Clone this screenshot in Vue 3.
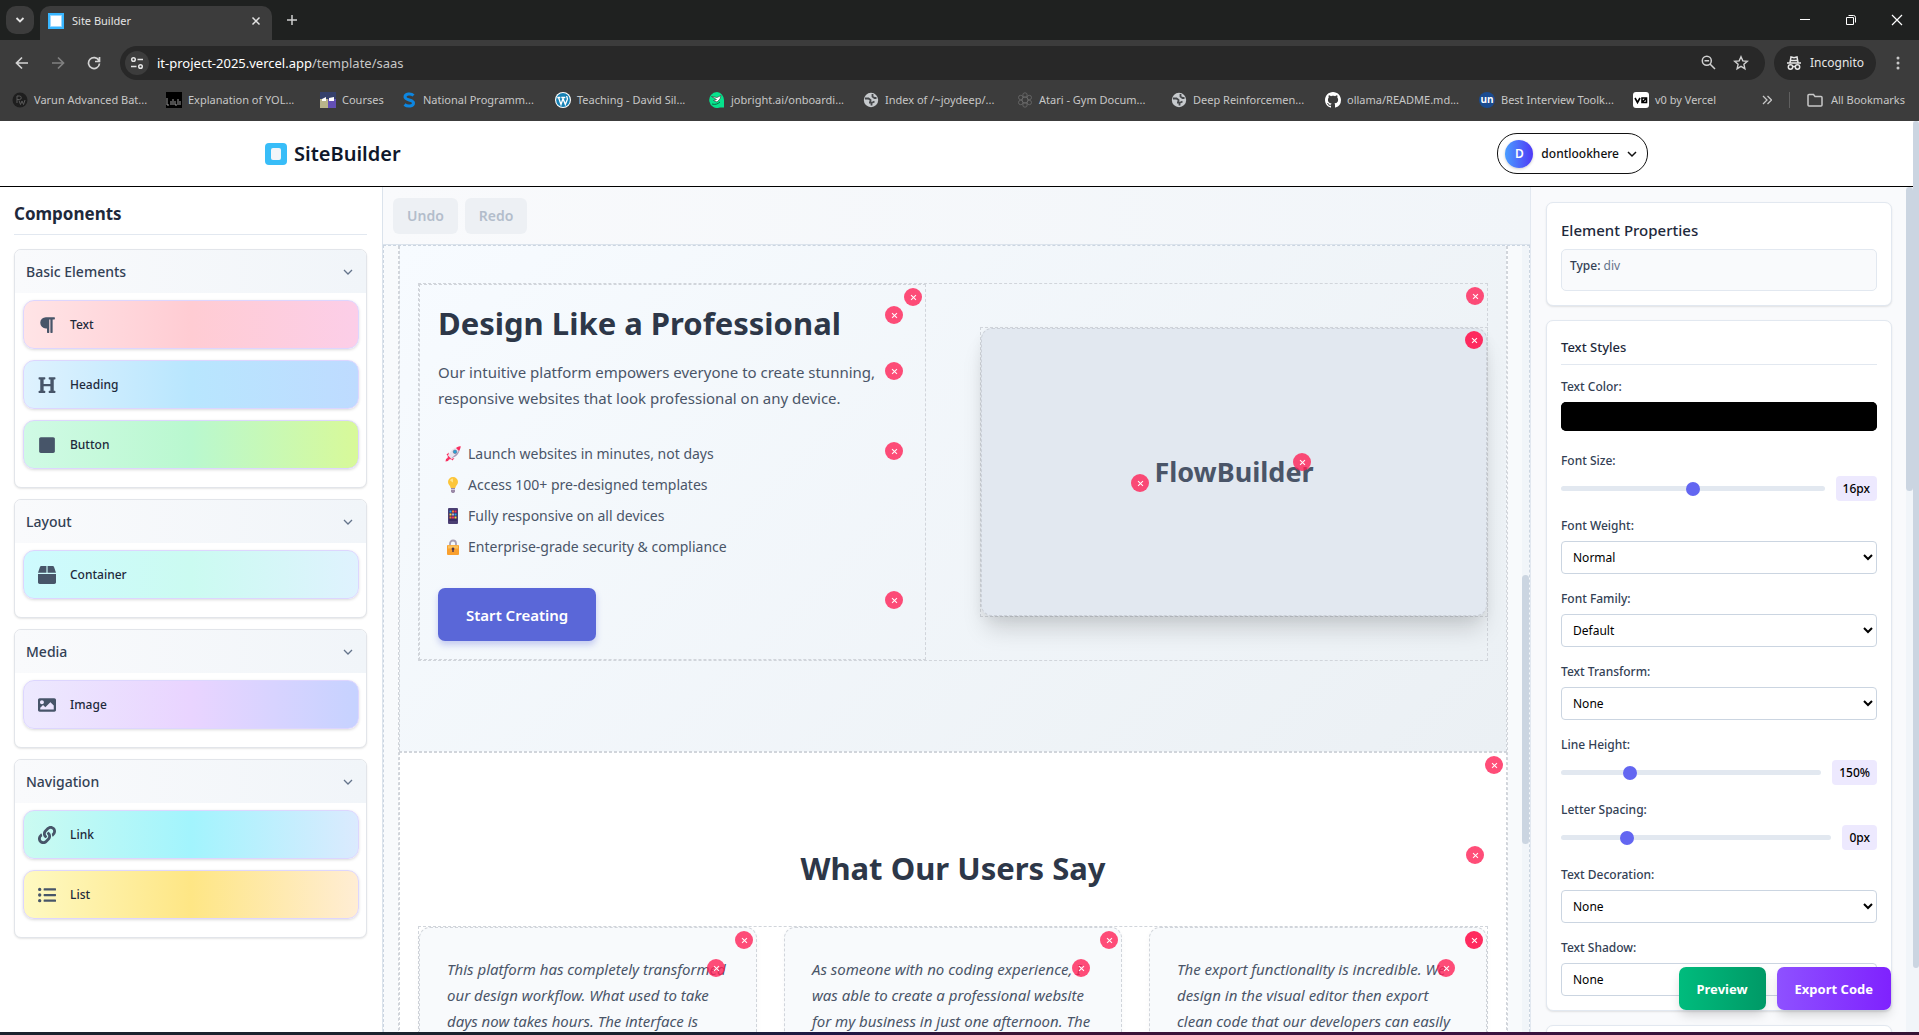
<script setup>
import { ref } from 'vue'

const bookmarks = [
  { label: 'Varun Advanced Bat...', icon: 'pw' },
  { label: 'Explanation of YOL...', icon: 'yolo' },
  { label: 'Courses', icon: 'courses', short: true },
  { label: 'National Programm...', icon: 'swayam' },
  { label: 'Teaching - David Sil...', icon: 'wp' },
  { label: 'jobright.ai/onboardi...', icon: 'job' },
  { label: 'Index of /~joydeep/...', icon: 'globe' },
  { label: 'Atari - Gym Docum...', icon: 'gym' },
  { label: 'Deep Reinforcemen...', icon: 'globe' },
  { label: 'ollama/README.md...', icon: 'github' },
  { label: 'Best Interview Toolk...', icon: 'un' },
  { label: 'v0 by Vercel', icon: 'v0', short: true }
]

const groups = [
  {
    title: 'Basic Elements',
    items: [
      { name: 'Text', tone: 'rose', box: '0 0 448 512', d: 'M448 48v32a16 16 0 0 1-16 16h-48v368a16 16 0 0 1-16 16h-32a16 16 0 0 1-16-16V96h-32v368a16 16 0 0 1-16 16h-32a16 16 0 0 1-16-16V352h-32a160 160 0 0 1 0-320h240a16 16 0 0 1 16 16z' },
      { name: 'Heading', tone: 'sky', box: '0 0 512 512', d: 'M448 96v320h32a16 16 0 0 1 16 16v32a16 16 0 0 1-16 16H320a16 16 0 0 1-16-16v-32a16 16 0 0 1 16-16h32V288H160v128h32a16 16 0 0 1 16 16v32a16 16 0 0 1-16 16H32a16 16 0 0 1-16-16v-32a16 16 0 0 1 16-16h32V96H32a16 16 0 0 1-16-16V48a16 16 0 0 1 16-16h160a16 16 0 0 1 16 16v32a16 16 0 0 1-16 16h-32v128h192V96h-32a16 16 0 0 1-16-16V48a16 16 0 0 1 16-16h160a16 16 0 0 1 16 16v32a16 16 0 0 1-16 16z' },
      { name: 'Button', tone: 'green', box: '0 0 448 512', d: 'M400 32H48C21.5 32 0 53.5 0 80v352c0 26.5 21.5 48 48 48h352c26.5 0 48-21.5 48-48V80c0-26.5-21.5-48-48-48z' }
    ]
  },
  {
    title: 'Layout',
    items: [
      { name: 'Container', tone: 'cyan', box: '0 0 512 512', d: 'M509.5 184.6L458.9 32.8C452.4 13.2 434.1 0 413.4 0H272v192h238.7c-.4-2.5-.4-5-1.2-7.4zM240 0H98.6c-20.7 0-39 13.2-45.5 32.8L2.5 184.6c-.8 2.4-.8 4.9-1.2 7.4H240V0zM0 224v240c0 26.5 21.5 48 48 48h416c26.5 0 48-21.5 48-48V224H0z' }
    ]
  },
  {
    title: 'Media',
    items: [
      { name: 'Image', tone: 'violet', box: '0 0 512 512', d: 'M464 448H48c-26.51 0-48-21.49-48-48V112c0-26.51 21.49-48 48-48h416c26.51 0 48 21.49 48 48v288c0 26.51-21.49 48-48 48zM112 120c-30.928 0-56 25.072-56 56s25.072 56 56 56 56-25.072 56-56-25.072-56-56-56zM64 384h384V272l-87.515-87.515c-4.686-4.686-12.284-4.686-16.971 0L208 320l-55.515-55.515c-4.686-4.686-12.284-4.686-16.971 0L64 336v48z' }
    ]
  },
  {
    title: 'Navigation',
    items: [
      { name: 'Link', tone: 'teal', box: '0 0 512 512', d: 'M326.612 185.391c59.747 59.809 58.927 155.698.36 214.59-.11.12-.24.25-.36.37l-67.2 67.2c-59.27 59.27-155.699 59.262-214.96 0-59.27-59.26-59.27-155.7 0-214.96l37.106-37.106c9.84-9.84 26.786-3.3 27.294 10.606.648 17.722 3.826 35.527 9.69 52.721 1.986 5.822.567 12.262-3.783 16.612l-13.087 13.087c-28.026 28.026-28.905 73.66-1.155 101.96 28.024 28.579 74.086 28.749 102.325.51l67.2-67.19c28.191-28.191 28.073-73.757 0-101.83-3.701-3.694-7.429-6.564-10.341-8.569a16.037 16.037 0 0 1-6.947-12.606c-.396-10.567 3.348-21.456 11.698-29.806l21.054-21.055c5.521-5.521 14.182-6.199 20.584-1.731a152.482 152.482 0 0 1 20.522 17.197zM467.547 44.449c-59.261-59.262-155.69-59.27-214.96 0l-67.2 67.2c-.12.12-.25.25-.36.37-58.566 58.892-59.387 154.781.36 214.59a152.454 152.454 0 0 0 20.521 17.196c6.402 4.468 15.064 3.789 20.584-1.731l21.054-21.055c8.35-8.35 12.094-19.239 11.698-29.806a16.037 16.037 0 0 0-6.947-12.606c-2.912-2.005-6.64-4.875-10.341-8.569-28.073-28.073-28.191-73.639 0-101.83l67.2-67.19c28.239-28.239 74.3-28.069 102.325.51 27.75 28.3 26.872 73.934-1.155 101.96l-13.087 13.087c-4.35 4.35-5.769 10.79-3.783 16.612 5.864 17.194 9.042 34.999 9.69 52.721.509 13.906 17.454 20.446 27.294 10.606l37.106-37.106c59.271-59.259 59.271-155.699.001-214.959z' },
      { name: 'List', tone: 'amber', box: '0 0 512 512', d: 'M48 48a48 48 0 1 0 48 48 48 48 0 0 0-48-48zm0 160a48 48 0 1 0 48 48 48 48 0 0 0-48-48zm0 160a48 48 0 1 0 48 48 48 48 0 0 0-48-48zm448 16H176a16 16 0 0 0-16 16v32a16 16 0 0 0 16 16h320a16 16 0 0 0 16-16v-32a16 16 0 0 0-16-16zm0-320H176a16 16 0 0 0-16 16v32a16 16 0 0 0 16 16h320a16 16 0 0 0 16-16V80a16 16 0 0 0-16-16zm0 160H176a16 16 0 0 0-16 16v32a16 16 0 0 0 16 16h320a16 16 0 0 0 16-16v-32a16 16 0 0 0-16-16z' }
    ]
  }
]

const features = [
  { icon: 'rocket', text: 'Launch websites in minutes, not days' },
  { icon: 'bulb', text: 'Access 100+ pre-designed templates' },
  { icon: 'phone', text: 'Fully responsive on all devices' },
  { icon: 'lock', text: 'Enterprise-grade security & compliance' }
]

const quotes = [
  ['This platform has completely transformed', 'our design workflow. What used to take', 'days now takes hours. The interface is'],
  ['As someone with no coding experience, I', 'was able to create a professional website', 'for my business in just one afternoon. The'],
  ['The export functionality is incredible. We', 'design in the visual editor then export', 'clean code that our developers can easily']
]

const textColor = ref('#000000')
const fields = ref([
  { id: 'font-size', label: 'Font Size:', kind: 'range', value: 50, shown: '16px' },
  { id: 'font-weight', label: 'Font Weight:', kind: 'select', value: 'Normal' },
  { id: 'font-family', label: 'Font Family:', kind: 'select', value: 'Default' },
  { id: 'text-transform', label: 'Text Transform:', kind: 'select', value: 'None' },
  { id: 'line-height', label: 'Line Height:', kind: 'range', value: 25, shown: '150%' },
  { id: 'letter-spacing', label: 'Letter Spacing:', kind: 'range', value: 23, shown: '0px' },
  { id: 'text-decoration', label: 'Text Decoration:', kind: 'select', value: 'None' },
  { id: 'text-shadow', label: 'Text Shadow:', kind: 'select', value: 'None' }
])
</script>

<template>
  <div class="window">
    <header class="browser">
      <div class="tabstrip">
        <button class="tab-search" aria-label="Search tabs">
          <svg width="10" height="10" viewBox="0 0 10 10"><path d="M1.500 3l3.500 3.500L8.500 3" fill="none" stroke="#e3e3e3" stroke-width="1.800" /></svg>
        </button>
        <div class="tab">
          <svg width="16" height="16" viewBox="0 0 16 16"><path fill="#38b6ff" d="M0 0h16v16H0z" /><path fill="#fff" stroke="#9bd8ff" d="M2.500 2.500h11v11h-11z" /></svg>
          <span class="tab-title">Site Builder</span>
          <button class="plain" aria-label="Close tab">
            <svg width="10" height="10" viewBox="0 0 10 10"><path d="M1.500 1.500l7 7m0-7l-7 7" stroke="#e3e3e3" stroke-width="1.500" /></svg>
          </button>
        </div>
        <button class="plain new-tab" aria-label="New tab">
          <svg width="12" height="12" viewBox="0 0 12 12"><path d="M6 1v10M1 6h10" stroke="#d0d0d0" stroke-width="1.500" /></svg>
        </button>
        <div class="win-controls">
          <svg width="12" height="12" viewBox="0 0 12 12"><path d="M1 5.500h10" stroke="#fff" /></svg>
          <svg width="12" height="12" viewBox="0 0 12 12"><path d="M1.500 3.500h7v7h-7zM3.500 1.500h5a2 2 0 0 1 2 2v5" fill="none" stroke="#fff" /></svg>
          <svg width="12" height="12" viewBox="0 0 12 12"><path d="M1 1l10 10M11 1L1 11" stroke="#fff" stroke-width="1.200" /></svg>
        </div>
      </div>

      <div class="toolbar">
        <nav class="nav-buttons">
          <button class="plain" aria-label="Back"><svg width="14" height="14" viewBox="0 0 14 14"><path d="M13 7H2m5-5.500L1.500 7 7 12.500" fill="none" stroke="#d3d3d3" stroke-width="1.700" /></svg></button>
          <button class="plain" aria-label="Forward"><svg width="14" height="14" viewBox="0 0 14 14"><path d="M1 7h11M7 1.500L12.500 7 7 12.500" fill="none" stroke="#808080" stroke-width="1.700" /></svg></button>
          <button class="plain" aria-label="Reload"><svg width="14" height="14" viewBox="0 0 14 14"><path d="M11.900 4.500A5.500 5.500 0 1 0 12.500 7.500M12.500 1v4.500H8" fill="none" stroke="#d3d3d3" stroke-width="1.700" /></svg></button>
        </nav>
        <div class="address">
          <span class="site-info">
            <svg width="14" height="14" viewBox="0 0 14 14" fill="none" stroke="#e3e3e3" stroke-width="1.500"><circle cx="3.500" cy="3.500" r="1.800" /><path d="M7.500 3.500H13M1 10.500h5.500" /><circle cx="10.500" cy="10.500" r="1.800" /></svg>
          </span>
          <span class="url"><b>it-project-2025.vercel.app</b>/template/saas</span>
          <span class="address-actions">
            <svg width="15" height="15" viewBox="0 0 15 15" fill="none" stroke="#d0d0d0" stroke-width="1.500"><circle cx="5.800" cy="5.800" r="4.500" /><path d="M3.500 5.800h4.600M9 9l5 5" /></svg>
            <svg width="16" height="16" viewBox="0 0 16 16" fill="none" stroke="#d0d0d0" stroke-width="1.400"><path d="M8 1.800l1.800 4.100 4.500.4-3.400 3 1 4.400L8 11.400l-3.900 2.300 1-4.400-3.400-3 4.500-.4z" /></svg>
          </span>
        </div>
        <div class="incognito">
          <svg width="16" height="16" viewBox="0 0 16 16" fill="none" stroke="#e6e6e6" stroke-width="1.500"><path d="M1 8h14M4 7.500L5 2l3 .8L11 2l1 5.500M4.500 5.500h7" /><circle cx="4.500" cy="12" r="2.200" /><circle cx="11.500" cy="12" r="2.200" /><path d="M6.700 11.500h2.600" /></svg>
          <span>Incognito</span>
        </div>
        <button class="plain" aria-label="Menu"><svg width="4" height="16" viewBox="0 0 4 16" fill="#c8c8c8"><circle cx="2" cy="3" r="1.500" /><circle cx="2" cy="8" r="1.500" /><circle cx="2" cy="13" r="1.500" /></svg></button>
      </div>

      <div class="bookmarks">
        <a v-for="b in bookmarks" :key="b.label" href="#" class="bookmark" :class="{ short: b.short }">
          <svg width="16" height="16" viewBox="0 0 16 16">
            <template v-if="b.icon === 'pw'"><circle cx="8" cy="8" r="7.500" fill="#1e1e1e" /><path d="M5 11V4h2.500a1.500 1.500 0 0 1 0 3.500H5m2 1l1.500 4L10 9l1.500 3.500L13 8" fill="none" stroke="#5a5a5a" /></template>
            <template v-else-if="b.icon === 'yolo'"><path fill="#000" d="M0 0h16v16H0z" /><path d="M1 6v7h2M5 9v4m2-6v6m2-4v4h2M12 7v6m2-4v4" fill="none" stroke="#9a9a9a" /></template>
            <template v-else-if="b.icon === 'courses'"><path fill="#35406b" d="M0 0h16v7H0z" /><path fill="#b9b58a" d="M0 7h8v9H0z" /><path fill="#6350b5" d="M8 7h8v9H8z" /><path fill="#fff" d="M2 7l4-2v4H2zM9 6l5-1v4H9z" /></template>
            <path v-else-if="b.icon === 'swayam'" d="M12.500 3.500C10 1 4 1.500 4 5s8.500 2.500 8.500 6-6 4-9 1.500" fill="none" stroke="#0d86e0" stroke-width="3" />
            <template v-else-if="b.icon === 'wp'"><circle cx="8" cy="8" r="8" fill="#fff" /><circle cx="8" cy="8" r="6.900" fill="#1681b5" /><path d="M2.300 5.500h3m1 0h4M3.500 5.500L6 12.500l2-6 2.300 6 2-5c.5-1.500-.6-2-.6-3.500" fill="none" stroke="#fff" stroke-width="1.300" /></template>
            <template v-else-if="b.icon === 'job'"><path d="M8 0a8 8 0 1 0 3 15.500h4V8a8 8 0 0 0-7-8z" fill="#06e28c" /><path d="M2.500 4.500l5.500 1 4-2-1 3.500-3 3-3.500-1.500 3-1z" fill="#fff" stroke="#333" stroke-width=".6" /><path d="M3 12c3 1 6 0 8-2" fill="none" stroke="#0a6b45" /></template>
            <template v-else-if="b.icon === 'globe'"><circle cx="8" cy="8" r="7.200" fill="#c7cacd" /><path d="M2 6.500h3.500L7.500 8v2.500H6M9.500 2v2.500l2 1.500h2M8.500 13.500V11l3-1.500" fill="none" stroke="#45474a" stroke-width="1.800" /></template>
            <g v-else-if="b.icon === 'gym'" fill="none" stroke="#6c6c6c" stroke-width=".8"><circle cx="8" cy="8" r="3" /><circle cx="8" cy="3" r="2.200" /><circle cx="8" cy="13" r="2.200" /><circle cx="3.700" cy="5.500" r="2.200" /><circle cx="12.300" cy="5.500" r="2.200" /><circle cx="3.700" cy="10.500" r="2.200" /><circle cx="12.300" cy="10.500" r="2.200" /></g>
            <path v-else-if="b.icon === 'github'" fill="#fff" d="M8 0C3.580 0 0 3.580 0 8c0 3.540 2.290 6.530 5.470 7.590.4.070.55-.17.55-.38 0-.19-.01-.82-.01-1.490-2.010.37-2.530-.49-2.690-.94-.09-.23-.48-.94-.82-1.130-.28-.15-.68-.52-.01-.53.63-.01 1.080.58 1.230.82.72 1.210 1.870.87 2.330.66.07-.52.28-.87.51-1.070-1.780-.2-3.640-.89-3.640-3.950 0-.87.31-1.590.82-2.150-.08-.2-.36-1.020.08-2.120 0 0 .67-.21 2.200.82.64-.18 1.320-.27 2-.27s1.360.09 2 .27c1.530-1.040 2.200-.82 2.200-.82.44 1.100.16 1.920.08 2.120.51.56.82 1.270.82 2.150 0 3.070-1.870 3.750-3.650 3.950.29.25.54.73.54 1.480 0 1.070-.01 1.930-.01 2.200 0 .21.15.46.55.38A8.010 8.010 0 0 0 16 8c0-4.420-3.580-8-8-8z" />
            <template v-else-if="b.icon === 'un'"><circle cx="8" cy="8" r="8" fill="#1b4b8f" /><text x="8" y="11" text-anchor="middle" class="glyph-un">un</text></template>
            <template v-else><rect width="16" height="16" rx="3" fill="#fff" /><path d="M2 6l2.500 4.500L7 6M9 6h4.500v4.500H9zM9 10.500L13.500 6" fill="none" stroke="#000" stroke-width="1.600" /></template>
          </svg>
          <span>{{ b.label }}</span>
        </a>
        <div class="bookmarks-end">
          <svg width="10" height="10" viewBox="0 0 10 10"><path d="M1 1l4 4-4 4M5.500 1l4 4-4 4" fill="none" stroke="#c7c7c7" stroke-width="1.300" /></svg>
          <i class="bar"></i>
          <a href="#" class="bookmark all">
            <svg width="16" height="14" viewBox="0 0 16 14"><path d="M1 2.500V12a1 1 0 0 0 1 1h12a1 1 0 0 0 1-1V4.500a1 1 0 0 0-1-1H8L6.500 1.500H2a1 1 0 0 0-1 1z" fill="none" stroke="#c7c7c7" stroke-width="1.500" /></svg>
            <span>All Bookmarks</span>
          </a>
        </div>
      </div>
    </header>

    <div class="page">
      <div class="site">
        <header class="site-header">
          <a href="#" class="brand">
            <svg width="22" height="22" viewBox="0 0 22 22"><rect width="22" height="22" rx="4" fill="#38bdf8" /><rect x="6" y="5" width="10" height="12" rx="2" fill="#f1f5f9" /></svg>
            <span>SiteBuilder</span>
          </a>
          <button class="account">
            <span class="avatar">D</span>
            <span>dontlookhere</span>
            <svg width="10" height="10" viewBox="0 0 10 10"><path d="M1 3l4 4 4-4" fill="none" stroke="#111" stroke-width="1.500" /></svg>
          </button>
        </header>

        <div class="workspace">
          <aside class="components">
            <h2>Components</h2>
            <section v-for="g in groups" :key="g.title" class="group">
              <button class="group-head">
                <span>{{ g.title }}</span>
                <svg width="10" height="6" viewBox="0 0 10 6"><path d="M1 1l4 4 4-4" fill="none" stroke="#64748b" stroke-width="1.300" /></svg>
              </button>
              <div class="group-body">
                <div v-for="i in g.items" :key="i.name" class="item" :class="i.tone">
                  <svg width="18" height="18" :viewBox="i.box"><path :d="i.d" fill="#475569" /></svg>
                  <span>{{ i.name }}</span>
                </div>
              </div>
            </section>
          </aside>

          <main class="editor">
            <div class="editor-bar">
              <button disabled>Undo</button>
              <button disabled>Redo</button>
            </div>
            <div class="canvas">
              <div class="artboard">
                <section class="hero">
                  <div class="hero-row">
                    <div class="hero-copy">
                      <button class="del" aria-label="Delete"></button>
                      <h1 class="block">Design Like a Professional<button class="del" aria-label="Delete"></button></h1>
                      <p class="block">Our intuitive platform empowers everyone to create stunning,<br />responsive websites that look professional on any device.<button class="del" aria-label="Delete"></button></p>
                      <div class="block">
                        <ul>
                          <li v-for="f in features" :key="f.icon">
                            <svg width="16" height="16" viewBox="0 0 16 16">
                              <template v-if="f.icon === 'rocket'">
                                <path fill="#f92f60" d="M4 6.500L1.500 8.500 3 10zM9.500 12L7.500 14.500 6 13z" /><path fill="#e9e4ef" d="M3.500 10C5 5 8 2 12 1.500L14.500 4C14 8 11 11 6 12.500z" /><path fill="#a79bb8" d="M6 12.500C11 11 14 8 14.500 4L12 7z" /><path fill="#f92f60" d="M11 2C13 .5 15 .3 15.700.3 15.700 1 15.500 3 14 5zM3 9.500l3.500 3.500-2 .5-2-2zM1 13l3-2 1 1-2 3-2.500.5z" /><circle cx="10" cy="5.800" r="1.800" fill="#26a0da" stroke="#5b6b85" stroke-width=".6" />
                              </template>
                              <template v-else-if="f.icon === 'bulb'">
                                <path fill="#fcc53a" d="M8 0a5 5 0 0 0-5 5c0 2.500 2.300 3.500 2.700 6h4.600C10.700 8.500 13 7.500 13 5a5 5 0 0 0-5-5z" /><path fill="#ffe38a" d="M5 3.500a3 3 0 0 1 3-2v4z" /><path fill="#9b8aa8" d="M6 11h4v3.500L9 16H7l-1-1.500z" /><path stroke="#d3c9dd" d="M6 12.500h4" />
                              </template>
                              <template v-else-if="f.icon === 'phone'">
                                <rect x="3" y="0" width="10" height="16" rx="1" fill="#4b3f73" /><rect x="4" y="2" width="8" height="11" fill="#3a2d63" /><path fill="#26a9f0" d="M4.500 2.500h2v2h-2zM9.500 5.500h2v2h-2z" /><path fill="#ff7a2e" d="M7 2.500h2v2H7zM4.500 8.500h2v2h-2z" /><path fill="#f92f60" d="M9.500 2.500h2v2h-2zM7 8.500h2v2H7z" /><path fill="#fcd53f" d="M4.500 5.500h2v2h-2zM9.500 8.500h2v2h-2z" /><path fill="#b4acc8" d="M7 5.500h2v2H7z" />
                              </template>
                              <template v-else>
                                <path d="M5 7V4.500a3 3 0 0 1 6 0V7" fill="none" stroke="#a9a0b5" stroke-width="1.800" /><rect x="2" y="6" width="12" height="10" rx="1" fill="#f9a02f" /><path fill="#fcc15a" d="M3 6.500h10v3H3z" /><path fill="#4a3553" d="M8 8.500a1.400 1.400 0 0 0-.7 2.600V13h1.400v-1.900A1.400 1.400 0 0 0 8 8.500z" />
                              </template>
                            </svg>
                            <span>{{ f.text }}</span>
                          </li>
                        </ul>
                        <button class="del" aria-label="Delete"></button>
                      </div>
                      <div class="block">
                        <button class="cta">Start Creating</button>
                        <button class="del" aria-label="Delete"></button>
                      </div>
                    </div>
                    <div class="hero-media">
                      <div class="frame block">
                        <div class="picture">
                          <strong class="mark">FlowBuilder<button class="del" aria-label="Delete"></button><button class="del before" aria-label="Delete"></button></strong>
                        </div>
                        <button class="del solid" aria-label="Delete"></button>
                      </div>
                    </div>
                    <button class="del" aria-label="Delete"></button>
                  </div>
                </section>

                <section class="users">
                  <button class="del" aria-label="Delete"></button>
                  <h2 class="block">What Our Users Say<button class="del" aria-label="Delete"></button></h2>
                  <div class="quotes">
                    <blockquote v-for="(q, n) in quotes" :key="n">
                      <button class="del" :class="{ solid: n === 2 }" aria-label="Delete"></button>
                      <p class="block"><span v-for="l in q" :key="l">{{ l }}</span><button class="del" aria-label="Delete"></button></p>
                    </blockquote>
                  </div>
                </section>
              </div>
              <div class="canvas-scroll"><i></i></div>
            </div>
          </main>

          <aside class="properties">
            <div class="panels">
              <section class="panel">
                <h2>Element Properties</h2>
                <div class="type"><b>Type:</b> div</div>
              </section>
              <section class="panel">
                <h3>Text Styles</h3>
                <div class="field color">
                  <label for="text-color">Text Color:</label>
                  <input id="text-color" v-model="textColor" type="color" />
                </div>
                <div v-for="f in fields" :key="f.id" class="field">
                  <label :for="f.id">{{ f.label }}</label>
                  <select v-if="f.kind === 'select'" :id="f.id"><option>{{ f.value }}</option></select>
                  <div v-else class="slider">
                    <input :id="f.id" v-model="f.value" type="range" min="0" max="100" />
                    <output :for="f.id">{{ f.shown }}</output>
                  </div>
                </div>
              </section>
              <section class="panel"></section>
            </div>
            <div class="props-scroll"><i></i></div>
            <div class="actions">
              <button class="preview">Preview</button>
              <button class="export">Export Code</button>
            </div>
          </aside>
        </div>
      </div>
      <div class="page-scroll"><i></i></div>
    </div>
    <div class="desktop-edge"></div>
  </div>
</template>

<style>
html, body { margin: 0; overflow: hidden; }
</style>

<style scoped>
.window, .window * { box-sizing: border-box; }
.window { display: flex; flex-direction: column; height: 100vh; overflow: hidden; font: 12px/20px "Noto Sans", "Open Sans", sans-serif; color: #1e293b; }
button, select, input { font: inherit; color: inherit; margin: 0; }
a { color: inherit; text-decoration: none; }
svg { display: block; flex: none; }
h1, h2, h3, p, ul, blockquote { margin: 0; padding: 0; }
.plain { background: none; border: 0; padding: 0; }

.browser { flex: none; background: #3c3c3c; font-size: 11px; line-height: 16px; color: #c7c7c7; }
.tabstrip { display: flex; align-items: flex-end; height: 40px; background: #1f2120; }
.tab-search { display: flex; align-items: center; justify-content: center; width: 28px; height: 28px; margin: 0 6px 6px; padding: 0; border: 0; border-radius: 10px; background: #3c3c3c; }
.tab { display: flex; align-items: center; gap: 8px; width: 232px; height: 34px; padding: 0 11px 4px 8px; border-radius: 10px 10px 0 0; background: #3c3c3c; color: #e3e3e3; }
.tab-title { flex: 1; }
.new-tab { margin: 0 0 14px 14px; }
.win-controls { display: flex; gap: 34px; margin: 0 16px 14px auto; }
.toolbar { display: flex; align-items: center; height: 46px; padding: 0 19px 0 15px; }
.nav-buttons { display: flex; gap: 22px; margin-right: 19px; }
.address { flex: 1; display: flex; align-items: center; height: 34px; padding: 0 16px 0 5px; border-radius: 17px; background: #282828; }
.site-info { display: flex; align-items: center; justify-content: center; width: 24px; height: 24px; border-radius: 12px; background: #3c3c3c; }
.url { margin-left: 8px; font-size: 13px; color: #c7c7c7; }
.url b { font-weight: 400; color: #fff; }
.address-actions { display: flex; gap: 17px; margin-left: auto; }
.incognito { display: flex; align-items: center; gap: 8px; height: 34px; margin: 0 20px 0 9px; padding: 0 12px; border-radius: 17px; background: #282828; font-size: 12px; color: #e6e6e6; white-space: nowrap; }
.bookmarks { display: flex; align-items: center; height: 35px; padding: 0 14px 8px 12px; }
.bookmark { display: flex; align-items: center; gap: 6px; width: 154px; white-space: nowrap; }
.bookmark.short { width: 81px; }
.bookmark.all { width: auto; gap: 8px; }
.bookmarks-end { display: flex; align-items: center; gap: 17px; margin-left: auto; }
.bar { width: 1px; height: 16px; background: #5f5f5f; }
.glyph-un { font: 700 10px "Open Sans", sans-serif; fill: #fff; }

.page { flex: 1; display: flex; min-height: 0; }
.site { flex: 1; display: flex; flex-direction: column; min-width: 0; background: #fff; }
.page-scroll { width: 6px; background: #f1f5f9; }
.page-scroll i { display: block; height: 93%; border-radius: 3px; background: #cbd5e1; }
.desktop-edge { flex: none; height: 3px; background: linear-gradient(90deg, #1b222d 35%, #1e1846 43%, #3a1535 52%, #3a1240 75%, #351535); }

.site-header { flex: none; display: flex; align-items: center; justify-content: space-between; height: 66px; padding: 0 265px; border-bottom: 1px solid #000; }
.brand { display: flex; align-items: center; gap: 7px; font-size: 20px; line-height: 28px; font-weight: 600; color: #0f172a; }
.account { display: flex; align-items: center; gap: 8px; height: 41px; padding: 0 10px 0 7px; border: 1px solid #111; border-radius: 20px; background: #fff; font-weight: 500; color: #111; }
.avatar { display: flex; align-items: center; justify-content: center; width: 28px; height: 28px; border-radius: 50%; background: linear-gradient(90deg, #4a9dff, #4f39f6); color: #fff; font-weight: 600; box-shadow: 0 1px 3px #0003; }

.workspace { flex: 1; display: flex; min-height: 0; }
.components { flex: none; width: 383px; padding: 13px 15px 0 14px; border-right: 1px solid #dbe3ec; overflow: hidden; }
.components h2 { height: 35px; margin-bottom: 14px; border-bottom: 1px solid #e2e8f0; font-size: 17px; line-height: 27px; font-weight: 700; }
.group { margin-bottom: 11px; border: 1px solid #e2e5ea; border-radius: 7px; background: #fff; box-shadow: 0 1px 2px #0000001a; overflow: hidden; }
.group-head { display: flex; align-items: center; justify-content: space-between; width: 100%; height: 43px; padding: 0 13px 0 11px; border: 0; background: linear-gradient(90deg, #f9fafc, #f1f5f9); font-size: 14px; font-weight: 500; color: #334155; }
.group-body { padding: 7px 7px 7px 8px; }
.item { display: flex; align-items: center; gap: 14px; height: 49px; margin-bottom: 11px; padding: 0 14px; border: 1px solid #ddd6fe; border-radius: 11px; box-shadow: 0 1px 3px #00000026; font-weight: 500; }
.rose { background: linear-gradient(90deg, #ffe4e6, #ffccd3, #fccee8); }
.sky { background: linear-gradient(90deg, #dff2fe, #b8e6fe, #bedbff); }
.green { background: linear-gradient(90deg, #d0fae5, #b9f8cf, #d8f999); }
.cyan { background: linear-gradient(90deg, #cefafe, #cbfbf1, #dff2fe); }
.violet { background: linear-gradient(90deg, #ede9fe, #e9d4ff, #c6d2ff); }
.teal { background: linear-gradient(90deg, #cbfbf1, #a2f4fd, #dbeafe); }
.amber { background: linear-gradient(90deg, #fef9c2, #fee685, #ffedd4); }

.editor { flex: 1; display: flex; flex-direction: column; min-width: 0; background: #f8fafc; }
.editor-bar { flex: none; display: flex; gap: 7px; height: 58px; padding: 11px 10px; border-bottom: 1px solid #dbe3ec; background: linear-gradient(90deg, #f9fafc, #f1f5f9); }
.editor-bar button { height: 36px; padding: 0 14px; border: 0; border-radius: 6px; background: #edf0f4; font-size: 14px; font-weight: 600; color: #b3bdcb; }
.canvas { flex: 1; display: flex; min-height: 0; padding-left: 14px; border: 1px dashed #cbd5e1; border-bottom: 0; overflow: hidden; }
.artboard { flex: 1; min-width: 0; height: max-content; margin-right: 14px; border: 1px dashed #d1d5db; border-top: 0; background: #fff; }
.canvas-scroll { flex: none; width: 7px; padding-top: 329px; background: #f1f5f9; }
.canvas-scroll i { display: block; height: 269px; border-radius: 4px; background: #cbd5e1; }
.hero { padding: 37px 18px 90px; border: 1px dashed #d1d5db; border-top: 0; background: linear-gradient(135deg, #f7fbff, #ebf0f4); }
.hero-row { position: relative; display: grid; grid-template-columns: 1fr 1fr; gap: 54px; border: 1px dashed #d1d5db; }
.hero-copy { position: relative; padding: 18px; border: 1px dashed #d1d5db; color: #4a5568; }
.block { position: relative; }
.hero-copy h1, .users h2 { font-size: 31px; font-weight: 700; color: #2d3748; }
.hero-copy h1 { margin-bottom: 16px; line-height: 40px; }
.hero-copy p { margin-bottom: 28px; font-size: 15px; line-height: 26px; white-space: nowrap; }
.hero-copy ul { margin-bottom: 23px; padding: 2px 0 0 7px; list-style: none; }
.hero-copy li { display: flex; align-items: center; gap: 7px; height: 31px; padding-bottom: 5px; font-size: 14px; line-height: 26px; }
.cta { display: block; height: 53px; padding: 0 28px; border: 0; border-radius: 7px; background: #5a67d8; box-shadow: 0 4px 6px #5a67d84d; font-size: 15px; font-weight: 600; color: #fff; }
.hero-media { display: flex; align-items: center; }
.frame { flex: 1; margin-right: -1px; border: 1px dashed #d1d5db; }
.picture { display: flex; align-items: center; justify-content: center; height: 288px; border: 1px dashed #cbd0d8; border-radius: 11px; background: #e2e8f0; box-shadow: 0 18px 23px -5px #00000026, 0 4px 12px #0000000d; }
.mark { position: relative; font-size: 27px; line-height: 44px; font-weight: 700; color: #4a5568; }
.users { position: relative; padding: 90px 18px 40px; border: 1px dashed #d1d5db; }
.users h2 { margin-bottom: 33px; line-height: 50px; text-align: center; }
.quotes { display: grid; grid-template-columns: repeat(3, 1fr); gap: 27px; border: 1px dashed #d1d5db; }
blockquote { position: relative; padding: 28px 27px; border: 1px dashed #d1d5db; border-radius: 11px; background: #f8fafc; box-shadow: 0 3px 6px #00000008; font-size: 15px; font-style: italic; line-height: 26px; color: #4a5568; white-space: nowrap; }
blockquote span { display: block; }
.del { position: absolute; top: 3px; right: 3px; width: 18px; height: 18px; padding: 0; border: 0; border-radius: 50%; background: #ff2056cc; }
.del::before, .del::after { content: ""; position: absolute; top: 9px; left: 6px; width: 7px; height: 1px; background: #fff; transform: rotate(45deg); }
.del::after { transform: rotate(-45deg); }
.del.solid { background: #ff2056f2; }
.block > .del { right: 4px; }
.del.before { top: 24px; right: 100%; margin-right: 5px; }

.properties { position: relative; flex: none; display: flex; width: 383px; border-left: 1px solid #e2e8f0; background: #f9fafc; overflow: hidden; }
.panels { flex: 1; padding: 15px 14px 0 15px; }
.panel { margin-bottom: 14px; padding: 14px; border: 1px solid #e2e8f0; border-radius: 7px; background: #fff; box-shadow: 0 1px 2px #0000001a; }
.panel h2 { margin-bottom: 6px; font-size: 15px; line-height: 26px; font-weight: 500; }
.type { height: 42px; padding: 6px 8px; border: 1px solid #e2e8f0; border-radius: 5px; background: #f9fafc; color: #64748b; }
.type b, .field label { font-weight: 500; color: #334155; }
.panel h3 { height: 30px; margin-bottom: 12px; border-bottom: 1px solid #e2e8f0; font-size: 13px; line-height: 24px; font-weight: 500; }
.field { margin-bottom: 15px; }
.field:last-child { margin-bottom: 0; }
.field.color { margin-bottom: 20px; }
.field label { display: block; margin-bottom: 5px; }
.field input[type="color"] { display: block; width: 100%; height: 29px; padding: 0; border: 0; border-radius: 5px; background: #000; }
.field input[type="color"]::-webkit-color-swatch-wrapper { padding: 0; }
.field input[type="color"]::-webkit-color-swatch { border: 0; border-radius: 5px; }
.field select { display: block; width: 100%; height: 33px; padding: 0 7px; border: 1px solid #cbd5e1; border-radius: 4px; background: #fff; color: #000; }
.slider { display: flex; align-items: center; gap: 11px; }
.slider input { flex: 1; min-width: 0; height: 5px; border-radius: 3px; background: #e2e8f0; appearance: none; -webkit-appearance: none; }
.slider input::-webkit-slider-thumb { appearance: none; -webkit-appearance: none; width: 14px; height: 14px; border-radius: 50%; background: #6366f1; }
.slider output { height: 25px; padding: 0 7px; border-radius: 4px; background: #ede9fe; line-height: 25px; font-weight: 500; color: #000; }
.props-scroll { width: 7px; background: #f1f5f9; }
.props-scroll i { display: block; height: 304px; border-radius: 4px; background: #cbd5e1; }
.actions { position: absolute; right: 22px; bottom: 22px; display: flex; gap: 11px; }
.actions button { height: 43px; padding: 0 18px; border: 0; border-radius: 7px; color: #fff; font-size: 13px; font-weight: 700; box-shadow: 0 6px 12px -2px #0000002e; }
.preview { background: linear-gradient(90deg, #00bc7d, #009966); }
.export { background: linear-gradient(90deg, #8e51ff, #7f22fe); }
</style>
